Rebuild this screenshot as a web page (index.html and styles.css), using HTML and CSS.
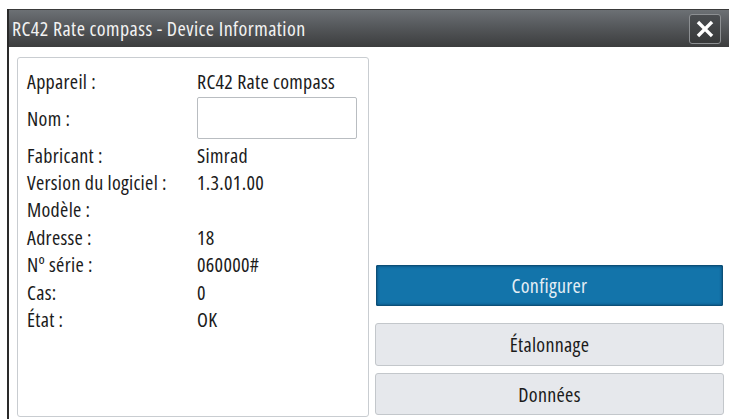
FILE: index.html
```html
<!DOCTYPE html>
<html lang="fr">
<head>
<meta charset="utf-8">
<title>RC42 Rate compass - Device Information</title>
<link rel="stylesheet" href="styles.css">
</head>
<body>
<div class="window">
  <header class="titlebar">
    <h1 class="title">RC42 Rate compass - Device Information</h1>
    <button class="close" aria-label="Fermer">
      <svg viewBox="0 0 20 20" width="18" height="18" aria-hidden="true">
        <path d="M3.5 3.5 L16.5 16.5 M16.5 3.5 L3.5 16.5" stroke="#ffffff" stroke-width="3.8" stroke-linecap="square" fill="none"/>
      </svg>
    </button>
  </header>
  <main class="content">
    <section class="panel">
      <div class="row"><span class="label">Appareil :</span><span class="value">RC42 Rate compass</span></div>
      <div class="row row-input"><span class="label">Nom :</span><input class="name-field" type="text" aria-label="Nom"></div>
      <div class="row"><span class="label">Fabricant :</span><span class="value">Simrad</span></div>
      <div class="row"><span class="label">Version du logiciel :</span><span class="value">1.3.01.00</span></div>
      <div class="row"><span class="label">Modèle :</span><span class="value"></span></div>
      <div class="row"><span class="label">Adresse :</span><span class="value">18</span></div>
      <div class="row"><span class="label">Nº série :</span><span class="value">060000#</span></div>
      <div class="row"><span class="label">Cas:</span><span class="value">0</span></div>
      <div class="row"><span class="label">État :</span><span class="value">OK</span></div>
    </section>
    <nav class="actions">
      <button class="btn btn-primary">Configurer</button>
      <button class="btn btn-calib">Étalonnage</button>
      <button class="btn">Données</button>
    </nav>
  </main>
</div>
</body>
</html>
```

FILE: styles.css
```css
html, body {
  margin: 0;
  padding: 0;
  background: #ffffff;
}

body {
  width: 729px;
  height: 419px;
  overflow: hidden;
  font-family: "Open Sans", "DejaVu Sans Condensed", sans-serif;
  font-stretch: 75%;
  letter-spacing: 0.3px;
  color: #1b1b1b;
}

.window {
  margin: 9px 0 0 7px;
  border-left: 2px solid #2a2a2a;
  height: 410px;
  display: flex;
  flex-direction: column;
}

/* dark gradient title strip */
.titlebar {
  height: 38px;
  flex: none;
  display: flex;
  align-items: center;
  justify-content: space-between;
  padding: 0 8px 0 3px;
  background: linear-gradient(#6c7074 0%, #55585b 45%, #3c3d3e 100%);
  border-top: 1px solid #3a3a3a;
  box-sizing: border-box;
}

.title {
  margin: 0;
  font-size: 20px;
  letter-spacing: 0.45px;
  font-weight: normal;
  color: #f2f2f2;
  line-height: 1;
}

.close {
  width: 32px;
  height: 30px;
  padding: 0;
  display: flex;
  align-items: center;
  justify-content: center;
  background: linear-gradient(#4a4d50, #38393a);
  border: 1px solid #8c8f92;
  border-radius: 3px;
}

.content {
  flex: 1;
  display: grid;
  grid-template-columns: 352px 1fr;
  column-gap: 6px;
  padding: 10px 5px 0 8px;
}

.panel {
  height: 360px;
  box-sizing: border-box;
  border: 1px solid #c9cdd1;
  border-radius: 3px;
  padding: 10px 0 0 9px;
}

.row {
  display: flex;
  align-items: center;
  height: 27.4px;
  font-size: 20px;
}

.row-input {
  height: 46px;
}

.label {
  width: 170px;
  flex: none;
}

.name-field {
  width: 160px;
  height: 42px;
  box-sizing: border-box;
  border: 1px solid #b9bdc1;
  border-radius: 2px;
  background: #ffffff;
  margin: 0;
  padding: 0 6px;
  font: inherit;
}

.actions {
  display: flex;
  flex-direction: column;
  justify-content: flex-end;
  height: 360px;
  padding-bottom: 2px;
  box-sizing: border-box;
}

.btn {
  height: 42px;
  margin: 0;
  border: 1px solid #c3c7cb;
  border-radius: 3px;
  background: #e6e8ec;
  color: #1b1b1b;
  font-family: inherit;
  font-stretch: 75%;
  letter-spacing: 0.3px;
  font-size: 20px;
}

.btn + .btn {
  margin-top: 7px;
}

.btn-primary {
  height: 41px;
  margin-left: 1px;
  margin-right: 1px;
  border: 1px solid #0c4f78;
  border-radius: 1px;
  background: #1374aa;
  color: #e4eef5;
  box-shadow: inset 0 0 3px rgba(0, 30, 60, 0.6);
}

.btn-primary + .btn-calib {
  margin-top: 17px;
  height: 43px;
}
```
